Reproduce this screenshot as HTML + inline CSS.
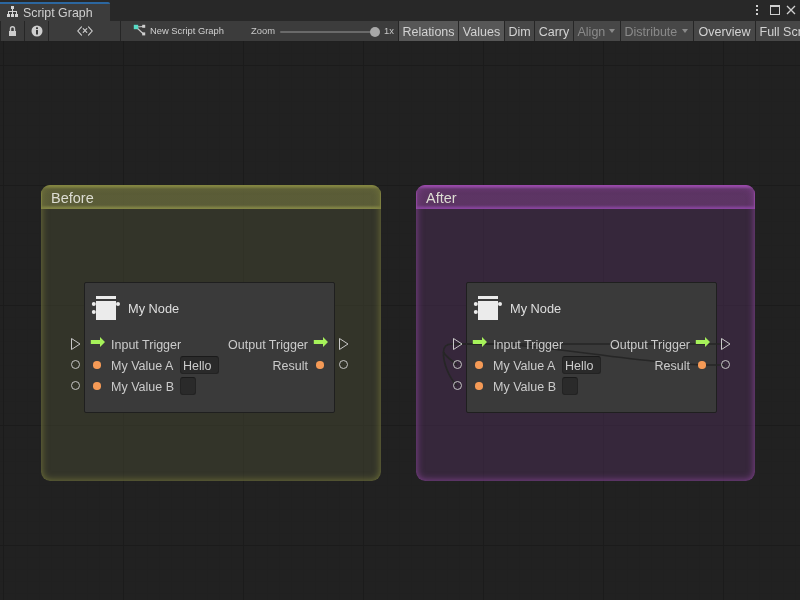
<!DOCTYPE html>
<html><head><meta charset="utf-8">
<style>
*{margin:0;padding:0;box-sizing:border-box}
html,body{width:800px;height:600px;overflow:hidden;background:#202020;font-family:"Liberation Sans",sans-serif}
.a{will-change:transform}
.a{position:absolute}
#top{left:0;top:0;width:800px;height:21px;background:#282828}
#tab{left:0;top:2px;width:110px;height:19px;background:#3c3c3c;border-top:2px solid #2c67a0;border-top-right-radius:2px}
#tabtxt{left:23px;top:5.8px;font-size:12.4px;color:#cfcfcf;white-space:nowrap}
#tb{left:0;top:21px;width:800px;height:20px;background:#3c3c3c}
#tbline{left:0;top:40px;width:800px;height:1px;background:#232323}
.sep{top:21px;width:1px;height:20px;background:#262626}
.btn{top:21px;height:20px;font-size:12.5px;line-height:22.6px;color:#d2d2d2;white-space:nowrap;text-align:center}
.on{background:#575757}
.off{background:#474747}
.dis{color:#8a8a8a}
#grid{left:0;top:41px;width:800px;height:559px;background-color:#212121;
background-image:
linear-gradient(to right,#1b1b1b 1px,transparent 1px),
linear-gradient(to bottom,#1b1b1b 1px,transparent 1px),
linear-gradient(to right,#202020 1px,transparent 1px),
linear-gradient(to bottom,#202020 1px,transparent 1px);
background-size:120px 120px,120px 120px,12px 12px,12px 12px;
background-position:3px 24px,3px 24px,3px 0px,3px 0px}
.grp{top:185px;width:340px;height:296px;border-radius:9px;overflow:hidden}
.ghead{left:0;top:0;width:100%;height:24px}
.gtitle{left:10px;top:4.6px;font-size:14.5px;color:#dcdcd2;white-space:nowrap}
.node{top:282px;width:251px;height:131px;background:#3a3a3a;border:1px solid #1f1f1f;border-radius:2px}
.lbl{font-size:12.5px;color:#cbcbcb;white-space:nowrap}
.title{font-size:12.8px;color:#dedede;white-space:nowrap}
.dot{width:7.5px;height:7.5px;border-radius:50%;background:#f59a56}
.cport{width:9px;height:9px;border-radius:50%;border:1px solid #c4c4c4}
.box{background:#2a2a2a;border:1px solid #232323;border-top-color:#1a1a1a;border-radius:3px}
</style></head><body>
<div class="a" id="top"></div>
<div class="a" id="tab"></div>
<svg class="a" style="left:0;top:0" width="20" height="20" viewBox="0 0 20 20"><g fill="#d4d4d4"><rect x="11" y="6" width="3" height="3"/><rect x="12" y="9" width="1" height="2"/><rect x="8" y="11" width="9" height="1"/><rect x="8" y="12" width="1" height="2"/><rect x="12" y="12" width="1" height="2"/><rect x="16" y="12" width="1" height="2"/><rect x="7" y="14" width="3" height="3"/><rect x="11" y="14" width="3" height="3"/><rect x="15" y="14" width="3" height="3"/></g></svg>
<div class="a" id="tabtxt">Script Graph</div>
<!-- window controls -->
<div class="a" style="left:756px;top:5px;width:2px;height:2px;background:#d0d0d0"></div>
<div class="a" style="left:756px;top:9px;width:2px;height:2px;background:#d0d0d0"></div>
<div class="a" style="left:756px;top:13px;width:2px;height:2px;background:#d0d0d0"></div>
<div class="a" style="left:770px;top:5px;width:10px;height:10px;border:1px solid #d0d0d0;border-top-width:2px"></div>
<svg class="a" style="left:786px;top:5px" width="10" height="10" viewBox="0 0 10 10"><path d="M1 1L9 9M9 1L1 9" stroke="#d0d0d0" stroke-width="1.3"/></svg>

<div class="a" id="tb"></div>
<div class="a sep" style="left:0px"></div>
<div class="a sep" style="left:24px"></div>
<div class="a sep" style="left:48px"></div>
<div class="a sep" style="left:120px"></div>
<!-- lock -->
<svg class="a" style="left:0;top:21px" width="24" height="19" viewBox="0 0 24 19"><path d="M10.5 10V7.8a2 2 0 0 1 4 0V10" fill="none" stroke="#cccccc" stroke-width="1.4"/><rect x="9" y="10" width="7" height="5" fill="#cccccc"/></svg>
<!-- info -->
<svg class="a" style="left:31px;top:25px" width="12" height="12" viewBox="0 0 12 12"><circle cx="6" cy="6" r="5.5" fill="#cfcfcf"/><rect x="5" y="5" width="2" height="4.5" fill="#3c3c3c"/><rect x="5" y="2.3" width="2" height="1.8" fill="#3c3c3c"/></svg>
<!-- <x> -->
<svg class="a" style="left:70px;top:21px" width="30" height="20" viewBox="70 21 30 20"><path d="M81.5 26.8L77.8 31L81.5 35.2M88.5 26.8L92.2 31L88.5 35.2M83.2 28.7L86.8 32.3M86.8 28.7L83.2 32.3" fill="none" stroke="#d0d0d0" stroke-width="1.1" stroke-linecap="round"/></svg>
<!-- new script graph icon -->
<svg class="a" style="left:130px;top:21px" width="20" height="20" viewBox="130 21 20 20"><path d="M136 27L143.5 26.5M136 27L143.5 34" stroke="#c8c8c8" stroke-width="1.2" fill="none"/><rect x="133.8" y="24.8" width="4.4" height="4.4" fill="#58dcc6"/><rect x="142.2" y="24.8" width="3" height="3" fill="#cfcfcf"/><rect x="142.2" y="32.4" width="3" height="3" fill="#cfcfcf"/></svg>
<div class="a" style="left:150px;top:25px;font-size:9.4px;color:#d0d0d0;white-space:nowrap">New Script Graph</div>
<div class="a" style="left:251px;top:25px;font-size:9.4px;color:#c8c8c8;white-space:nowrap">Zoom</div>
<div class="a" style="left:280px;top:31px;width:95px;height:2px;background:#6a6a6a;border-radius:1px"></div>
<div class="a" style="left:369.5px;top:26.5px;width:10px;height:10px;border-radius:50%;background:#a8a8a8"></div>
<div class="a" style="left:383.5px;top:25px;font-size:9.4px;color:#c8c8c8;white-space:nowrap">1x</div>

<div class="a" style="left:398px;top:21px;width:402px;height:20px;background:#262626"></div>
<div class="a btn on" style="left:399px;width:59px">Relations</div>
<div class="a btn on" style="left:459px;width:45px">Values</div>
<div class="a btn off" style="left:505px;width:29px">Dim</div>
<div class="a btn off" style="left:535px;width:38px">Carry</div>
<div class="a btn off dis" style="left:574px;width:46px;text-align:left;padding-left:3.5px">Align</div>
<div class="a btn off dis" style="left:621px;width:72px;text-align:left;padding-left:3.5px">Distribute</div>
<div class="a" style="left:608.5px;top:29px;width:0;height:0;border-left:3.5px solid transparent;border-right:3.5px solid transparent;border-top:4px solid #8a8a8a"></div>
<div class="a" style="left:682px;top:29px;width:0;height:0;border-left:3.5px solid transparent;border-right:3.5px solid transparent;border-top:4px solid #8a8a8a"></div>
<div class="a btn off" style="left:694px;width:61px">Overview</div>
<div class="a btn off" style="left:756px;width:60px;text-align:left;padding-left:3.5px">Full Screen</div>

<div class="a" id="grid"></div>

<!-- Before group -->
<div class="a grp" style="left:41px;background:rgba(69,71,49,0.5)">
  <div class="a ghead" style="background:linear-gradient(to bottom,#8e9048 0px,#8e9048 0.8px,rgba(95,97,57,0.9) 4px,rgba(95,97,57,0.9) 20px,#828446 23px,#828446 24px);box-shadow:inset 1px 0 1px rgba(142,144,72,0.8),inset -1px 0 1px rgba(142,144,72,0.8)"></div>
  <div class="a" style="left:0;top:0;width:100%;height:296px;border-radius:9px;box-shadow:inset 0 0 7px 1px rgba(120,122,60,0.8)"></div>
  <div class="a gtitle">Before</div>
</div>
<!-- After group -->
<div class="a grp" style="left:416px;width:339px;background:rgba(75,45,85,0.5)">
  <div class="a ghead" style="background:linear-gradient(to bottom,#a24fb3 0px,#a24fb3 0.8px,rgba(97,55,105,0.9) 4px,rgba(97,55,105,0.9) 20px,#84449a 23px,#84449a 24px);box-shadow:inset 1px 0 1px rgba(162,79,179,0.8),inset -1px 0 1px rgba(162,79,179,0.8)"></div>
  <div class="a" style="left:0;top:0;width:100%;height:296px;border-radius:9px;box-shadow:inset 0 0 7px 1px rgba(140,70,155,0.8)"></div>
  <div class="a gtitle">After</div>
</div>


<div class="a" style="left:84px;top:282px;width:251px;height:131px">
 <div class="a node" style="left:0;top:0"></div>
 <svg class="a" style="left:6px;top:12px" width="32" height="28" viewBox="0 0 32 28">
  <g fill="#ebebeb"><rect x="6" y="2" width="20" height="3"/><rect x="6" y="7" width="20" height="19"/>
  <circle cx="3.8" cy="10" r="2"/><circle cx="3.8" cy="18" r="2"/><circle cx="28" cy="10" r="2"/></g>
 </svg>
 <div class="a title" style="left:44px;top:19px">My Node</div>
 <svg class="a" style="left:-14px;top:55px" width="12" height="14" viewBox="0 0 12 14"><path d="M1.5 1.5L10 7L1.5 12.5Z" fill="none" stroke="#c8c8c8" stroke-width="1"/></svg>
 <div class="a cport" style="left:-13px;top:78px"></div>
 <div class="a cport" style="left:-13px;top:99px"></div>
 <svg class="a" style="left:6px;top:55px" width="16" height="11" viewBox="0 0 16 11"><path d="M0.8 3H10V0L15 5L10 10V7H0.8Z" fill="#a6f25a"/></svg>
 <div class="a dot" style="left:9px;top:79px"></div>
 <div class="a dot" style="left:9px;top:100px"></div>
 <div class="a lbl" style="left:27px;top:56px">Input Trigger</div>
 <div class="a lbl" style="left:27px;top:77px">My Value A</div>
 <div class="a lbl" style="left:27px;top:98px">My Value B</div>
 <div class="a box" style="left:96px;top:74px;width:39px;height:18px"></div>
 <div class="a lbl" style="left:99px;top:77px">Hello</div>
 <div class="a box" style="left:96px;top:95px;width:16px;height:18px"></div>
 <div class="a lbl" style="left:143px;top:56px;width:81px;text-align:right">Output Trigger</div>
 <div class="a lbl" style="left:143px;top:77px;width:81px;text-align:right">Result</div>
 <svg class="a" style="left:229px;top:55px" width="16" height="11" viewBox="0 0 16 11"><path d="M0.8 3H10V0L15 5L10 10V7H0.8Z" fill="#a6f25a"/></svg>
 <div class="a dot" style="left:231.5px;top:79px"></div>
 <svg class="a" style="left:254px;top:55px" width="12" height="14" viewBox="0 0 12 14"><path d="M1.5 1.5L10 7L1.5 12.5Z" fill="none" stroke="#c8c8c8" stroke-width="1"/></svg>
 <div class="a cport" style="left:254.5px;top:78px"></div>
</div>

<div class="a" style="left:466px;top:282px;width:251px;height:131px">
 <div class="a node" style="left:0;top:0"></div><svg class="a" style="left:-466px;top:-282px;overflow:visible" width="800" height="600" viewBox="0 0 800 600"><g fill="none" stroke="#262626" stroke-width="1.7">
<path d="M457 344H725"/>
<path d="M725 365H706C653 365 538 344 494 344H452C446 344 443.5 347 443.5 352C444 355 451 360 457 365"/>
<path d="M443.5 352C443 362 448 376 457 386"/>
</g></svg>
 <svg class="a" style="left:6px;top:12px" width="32" height="28" viewBox="0 0 32 28">
  <g fill="#ebebeb"><rect x="6" y="2" width="20" height="3"/><rect x="6" y="7" width="20" height="19"/>
  <circle cx="3.8" cy="10" r="2"/><circle cx="3.8" cy="18" r="2"/><circle cx="28" cy="10" r="2"/></g>
 </svg>
 <div class="a title" style="left:44px;top:19px">My Node</div>
 <svg class="a" style="left:-14px;top:55px" width="12" height="14" viewBox="0 0 12 14"><path d="M1.5 1.5L10 7L1.5 12.5Z" fill="none" stroke="#c8c8c8" stroke-width="1"/></svg>
 <div class="a cport" style="left:-13px;top:78px"></div>
 <div class="a cport" style="left:-13px;top:99px"></div>
 <svg class="a" style="left:6px;top:55px" width="16" height="11" viewBox="0 0 16 11"><path d="M0.8 3H10V0L15 5L10 10V7H0.8Z" fill="#a6f25a"/></svg>
 <div class="a dot" style="left:9px;top:79px"></div>
 <div class="a dot" style="left:9px;top:100px"></div>
 <div class="a lbl" style="left:27px;top:56px">Input Trigger</div>
 <div class="a lbl" style="left:27px;top:77px">My Value A</div>
 <div class="a lbl" style="left:27px;top:98px">My Value B</div>
 <div class="a box" style="left:96px;top:74px;width:39px;height:18px"></div>
 <div class="a lbl" style="left:99px;top:77px">Hello</div>
 <div class="a box" style="left:96px;top:95px;width:16px;height:18px"></div>
 <div class="a lbl" style="left:143px;top:56px;width:81px;text-align:right">Output Trigger</div>
 <div class="a lbl" style="left:143px;top:77px;width:81px;text-align:right">Result</div>
 <svg class="a" style="left:229px;top:55px" width="16" height="11" viewBox="0 0 16 11"><path d="M0.8 3H10V0L15 5L10 10V7H0.8Z" fill="#a6f25a"/></svg>
 <div class="a dot" style="left:231.5px;top:79px"></div>
 <svg class="a" style="left:254px;top:55px" width="12" height="14" viewBox="0 0 12 14"><path d="M1.5 1.5L10 7L1.5 12.5Z" fill="none" stroke="#c8c8c8" stroke-width="1"/></svg>
 <div class="a cport" style="left:254.5px;top:78px"></div>
</div>
</body></html>
